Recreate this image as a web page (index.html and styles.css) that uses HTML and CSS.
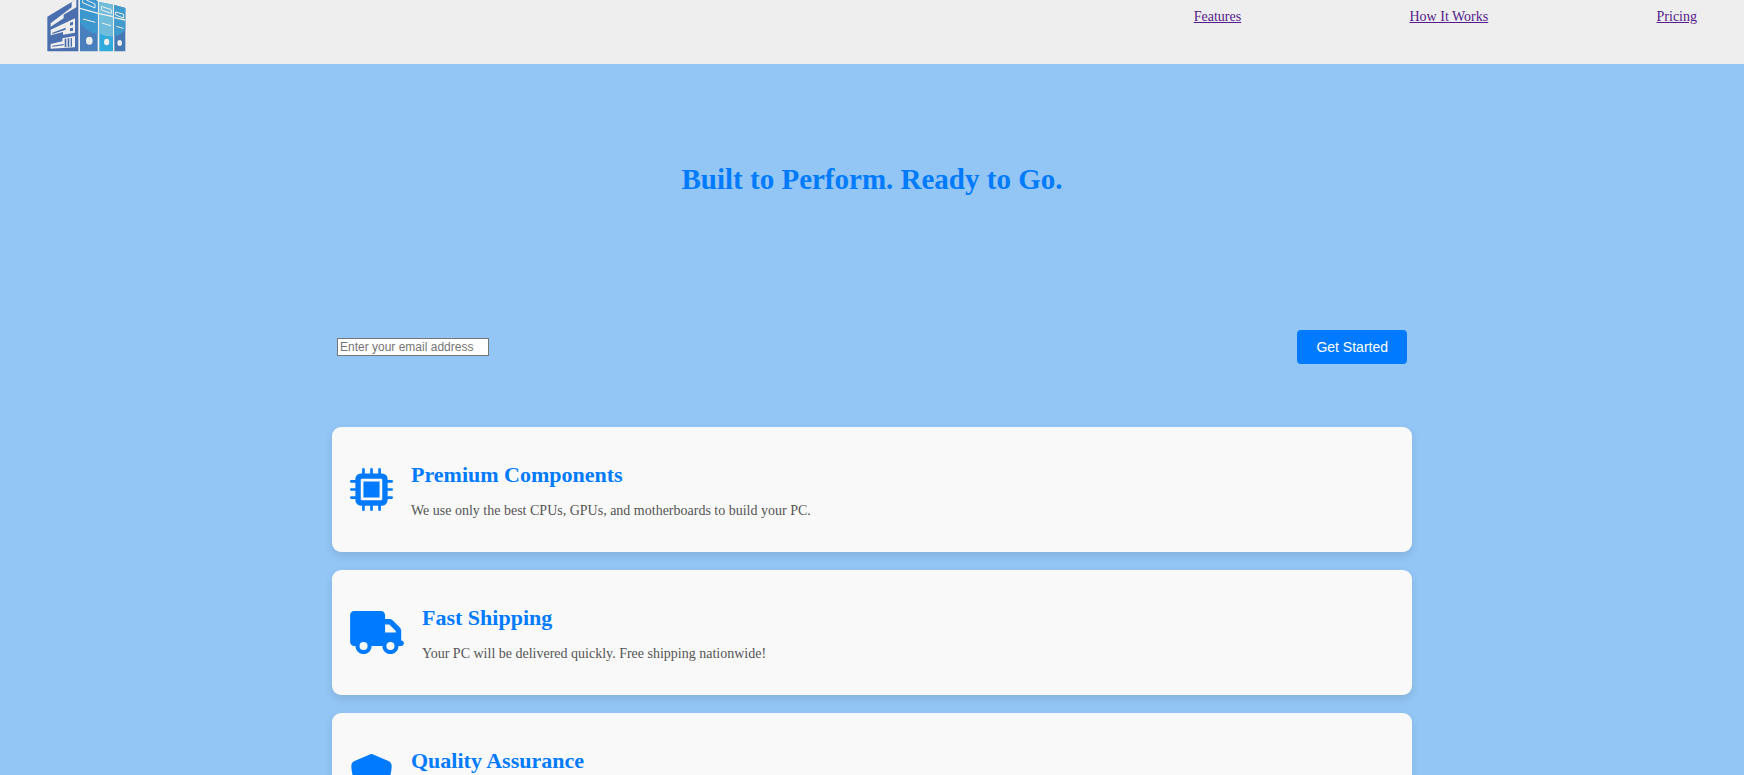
FILE: index.html
```html
<!DOCTYPE html>
<html lang="en">
<head>
<meta charset="utf-8">
<title>Built to Perform. Ready to Go.</title>
<meta name="viewport" content="width=device-width, initial-scale=1">
<link rel="stylesheet" href="styles.css">
</head>
<body>
<header class="header">
  <svg class="logo" viewBox="50 0 237 156" aria-hidden="true">
    <path fill="#4a6eae" d="M51 50 134 0h10v154H51z"/>
    <path fill="#4a7fbe" d="M149 0h46l7 4v150h-53z"/>
    <path fill="#3c97cf" d="M149 0h46l7 4v98q-32-4-53-34z"/>
    <path fill="#30abdc" d="M207 6l41 8v140h-41z"/>
    <path fill="#6fbddb" d="M207 6l41 8v96q-24 0-41-10z"/>
    <path fill="#4678b5" d="M252 15l33 9v130h-33z"/>
    <path fill="#3e9bcb" d="M252 15l33 9v66q-14 16-33 19z"/>
    <g fill="#eee">
      <path d="M61 70 124 22V6L134 0h4v22l-38 22v11L61 80z"/>
      <path d="M61 89 134 55v43l-36 6v-8l-37 10z"/>
      <path d="M61 132l35-8v-9l38-7v34l-73 4z"/>
    </g>
    <g fill="#4a6eae">
      <path d="M66 98l40-15v6l-40 13zM119 68l9-3v9l-9 3zM119 85l9-2v9l-9 2zM66 137l34-5v4l-34 4zM103 116h5v25h-5zM112 115h5v25h-5zM121 114h4v26h-4z"/>
    </g>
    <g fill="none" stroke="#eee" stroke-width="4">
      <path d="M149 25l54 15M206 41l42 9M252 53l33 7"/>
      <path d="M157 1v7l37 16V12L168 0M213 19v11l30 10V29zM256 36v9l24 9V43z" stroke-width="3"/>
      <path d="M158 57l37 10M214 69l28 8M258 79l21 6" stroke-width="3"/>
    </g>
    <g fill="#eee"><ellipse cx="177" cy="122" rx="10" ry="12"/><ellipse cx="229" cy="126" rx="8" ry="10"/><ellipse cx="268" cy="129" rx="7" ry="9"/></g>
  </svg>
  <nav class="nav">
    <a href="#features">Features</a>
    <a href="#how-it-works">How It Works</a>
    <a href="#pricing">Pricing</a>
  </nav>
</header>
<main class="main">
  <h1 class="title">Built to Perform. Ready to Go.</h1>
  <form class="signup" id="how-it-works">
    <input class="email" type="email" placeholder="Enter your email address" aria-label="Enter your email address">
    <button class="submit" type="submit">Get Started</button>
  </form>
  <section class="features" id="features">
    <article class="card">
      <svg class="icon" viewBox="0 0 512 512" aria-hidden="true">
        <path fill-rule="evenodd" d="M128 64H384a64 64 0 0 1 64 64V384a64 64 0 0 1-64 64H128a64 64 0 0 1-64-64V128a64 64 0 0 1 64-64zM144 128a16 16 0 0 0-16 16V368a16 16 0 0 0 16 16H368a16 16 0 0 0 16-16V144a16 16 0 0 0-16-16zM160 160H352V352H160z"/>
        <path class="pins" d="M160 16V80M256 16V80M352 16V80M160 432V496M256 432V496M352 432V496M16 160H80M16 256H80M16 352H80M432 160H496M432 256H496M432 352H496"/>
      </svg>
      <div class="card-text">
        <h2>Premium Components</h2>
        <p>We use only the best CPUs, GPUs, and motherboards to build your PC.</p>
      </div>
    </article>
    <article class="card">
      <svg class="icon icon-wide" viewBox="0 0 640 512" aria-hidden="true"><path d="M48 0C21.5 0 0 21.5 0 48V368c0 26.5 21.5 48 48 48H64c0 53 43 96 96 96s96-43 96-96H384c0 53 43 96 96 96s96-43 96-96h32c17.7 0 32-14.3 32-32s-14.3-32-32-32V288 256 237.3c0-17-6.7-33.3-18.7-45.3L512 114.7c-12-12-28.3-18.7-45.3-18.7H416V48c0-26.5-21.5-48-48-48H48zM416 160h50.7L544 237.3V256H416V160zM112 416a48 48 0 1 1 96 0 48 48 0 1 1 -96 0zm368-48a48 48 0 1 1 0 96 48 48 0 1 1 0-96z"/></svg>
      <div class="card-text">
        <h2>Fast Shipping</h2>
        <p>Your PC will be delivered quickly. Free shipping nationwide!</p>
      </div>
    </article>
    <article class="card">
      <svg class="icon" viewBox="0 0 512 512" aria-hidden="true"><path d="M256 0c4.6 0 9.2 1 13.4 2.9L457.7 82.8c22 9.3 38.4 31 38.3 57.2c-.5 99.2-41.3 280.7-213.6 363.2c-16.7 8-36.1 8-52.8 0C57.3 420.7 16.5 239.2 16 140c-.1-26.2 16.3-47.9 38.3-57.2L242.7 2.9C246.8 1 251.4 0 256 0z"/></svg>
      <div class="card-text">
        <h2>Quality Assurance</h2>
      </div>
    </article>
  </section>
</main>
</body>
</html>
```

FILE: styles.css
```css
* { box-sizing: border-box; }

body {
  margin: 0;
  height: 100vh;
  overflow: hidden;
  background: #93c6f5;
  font-family: "Liberation Serif", "Times New Roman", serif;
  font-size: 14px;
}

.header {
  display: flex;
  justify-content: space-between;
  align-items: flex-start;
  height: 64px;
  padding: 0 47px;
  background: #eee;
}

.logo { width: 79px; height: 52px; }

.nav {
  display: flex;
  justify-content: space-between;
  width: 30.5%;
  padding-top: 9px;
  line-height: 16px;
}

.nav a { color: #551a8b; }

.main {
  max-width: 1080px;
  margin: 0 auto;
}

.title {
  margin: 0;
  padding: 98px 0 134px;
  color: #007bff;
  font-size: 29px;
  line-height: 34px;
  text-align: center;
}

.signup {
  display: flex;
  justify-content: space-between;
  align-items: center;
  padding: 0 5px;
  margin-bottom: 63px;
}

.email {
  width: 152px;
  height: 18px;
  padding: 1px 2px;
  border: 1px solid #767676;
  border-radius: 0;
  background: #fff;
  font: 12px "Liberation Sans", Arial, sans-serif;
}

.email::placeholder { color: #757575; }

.submit {
  height: 34px;
  padding: 0 19px;
  border: 0;
  border-radius: 4px;
  background: #007bff;
  color: #fff;
  font: 14px "Liberation Sans", Arial, sans-serif;
}

.features {
  display: grid;
  gap: 18px;
}

.card {
  display: flex;
  align-items: center;
  gap: 18px;
  padding: 18px;
  border-radius: 9px;
  background: #f9f9f9;
  box-shadow: 0 4px 8px rgba(0, 0, 0, 0.1);
}

.icon {
  flex: none;
  width: 43px;
  height: 43px;
  fill: #007bff;
}

.icon-wide { width: 54px; }

.pins {
  fill: none;
  stroke: #007bff;
  stroke-width: 32px;
  stroke-linecap: round;
}

.card-text {
  min-height: 89px;
  padding: 18px 0 15px;
}

.card h2 {
  margin: 0 0 16px;
  color: #007bff;
  font-size: 22px;
  line-height: 24px;
}

.card p {
  margin: 0;
  color: #555;
  line-height: 16px;
}
```
